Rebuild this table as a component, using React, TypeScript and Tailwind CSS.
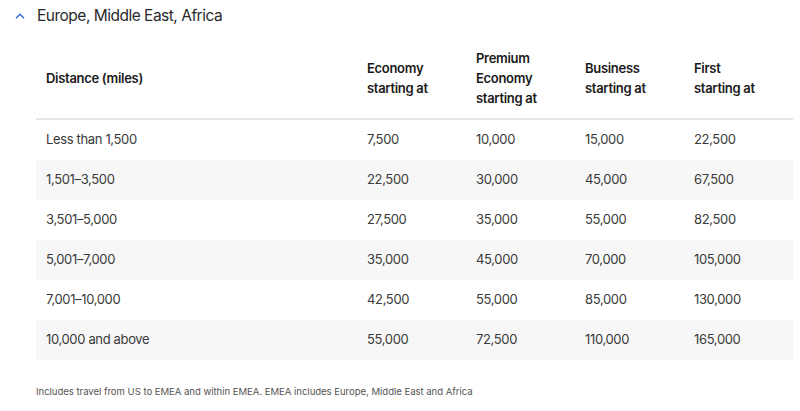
import React from "react";

const rows = [
  ["Less than 1,500", "7,500", "10,000", "15,000", "22,500"],
  ["1,501–3,500", "22,500", "30,000", "45,000", "67,500"],
  ["3,501–5,000", "27,500", "35,000", "55,000", "82,500"],
  ["5,001–7,000", "35,000", "45,000", "70,000", "105,000"],
  ["7,001–10,000", "42,500", "55,000", "85,000", "130,000"],
  ["10,000 and above", "55,000", "72,500", "110,000", "165,000"],
];

export default function App() {
  return (
    <div className="w-[800px] h-[411px] bg-white overflow-hidden" style={{ fontFamily: "Inter, 'Noto Sans', sans-serif" }}>
      <div className="flex items-center h-[31px] pl-[15px]">
        <svg width="10" height="6" viewBox="0 0 10 6" className="mr-[12px] mt-[1px]">
          <path d="M1 5.2 L5 1.2 L9 5.2" fill="none" stroke="#2a6bd1" strokeWidth="1.4" />
        </svg>
        <span className="text-[15.5px] text-[#2a2a2a] tracking-[-0.5px]">Europe, Middle East, Africa</span>
      </div>
      <div className="ml-[36px] mt-[9px] w-[757px]">
        <div className="grid grid-cols-[321px_109px_109px_109px_109px] h-[80px] pb-[2px] items-center border-b-[2px] border-[#e6e6e6] text-[13px] font-semibold text-[#1a1a1a] leading-[20px] tracking-[-0.3px]">
          <div className="pl-[10px]">Distance (miles)</div>
          <div className="pl-[10px]">Economy<br />starting at</div>
          <div className="pl-[10px]">Premium<br />Economy<br />starting at</div>
          <div className="pl-[10px]">Business<br />starting at</div>
          <div className="pl-[10px]">First<br />starting at</div>
        </div>
        {rows.map((r, i) => (
          <div
            key={i}
            className={`grid grid-cols-[321px_109px_109px_109px_109px] h-[40px] items-center text-[13px] text-[#3a3a3a] tracking-[-0.35px] ${i % 2 === 1 ? "bg-[#f7f7f7]" : "bg-white"}`}
          >
            {r.map((c, j) => (
              <div key={j} className="pl-[10px]">{c}</div>
            ))}
          </div>
        ))}
      </div>
      <div className="ml-[36px] mt-[25px] text-[9.6px] tracking-[-0.05px] text-[#555]">
        Includes travel from US to EMEA and within EMEA. EMEA includes Europe, Middle East and Africa
      </div>
    </div>
  );
}
